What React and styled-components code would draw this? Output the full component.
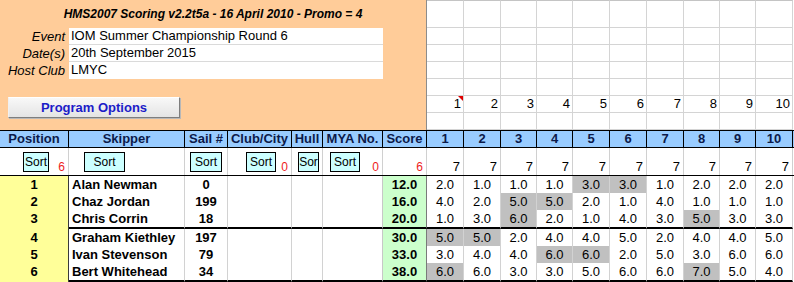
import React from "react";
import styled, { createGlobalStyle } from "styled-components";

const GlobalStyle = createGlobalStyle`
  body {
    margin: 0;
    background: #fff;
    font-family: "Liberation Sans", Arial, sans-serif;
    font-size: 13px;
    color: #000;
  }
`;

// column widths copied off the sheet
const COLS = "69px 116px 43px 64px 31px 60px 44px 37px 37px 36px 36px 37px 37px 37px 36px 36px 37px";
const RACE_COLS = "37px 37px 36px 36px 37px 37px 37px 36px 36px 37px";

const Sheet = styled.div`
  width: 794px;
  height: 282px;
  overflow: hidden;
  display: flex;
  flex-direction: column;
`;

const Top = styled.div`
  display: flex;
  height: 130px;
`;

const Panel = styled.div`
  box-sizing: border-box;
  width: 427px;
  background: #ffcc99;
  border-right: 1px solid #8c8c8c;
  display: flex;
  flex-direction: column;
`;

const Title = styled.div`
  height: 28px;
  line-height: 28px;
  text-align: center;
  font-size: 12px;
  font-weight: 700;
  font-style: italic;
`;

const Info = styled.div`
  display: grid;
  grid-template-columns: 69px 314px;
  grid-auto-rows: 17px;
`;

const Label = styled.div`
  text-align: right;
  padding-right: 4px;
  font-style: italic;
  line-height: 17px;
`;

const Value = styled.div`
  box-sizing: border-box;
  background: #fff;
  padding-left: 2px;
  line-height: 16px;
  border-bottom: 1px solid ${(p) => (p.$last ? "#fff" : "#dadada")};
`;

const ButtonRow = styled.div`
  padding: 18px 0 0 8px;
`;

const OptionsButton = styled.button`
  box-sizing: border-box;
  width: 172px;
  height: 21px;
  padding: 0;
  font-family: "Liberation Sans", Arial, sans-serif;
  font-size: 13px;
  font-weight: 700;
  color: #1c1cc8;
  background: linear-gradient(#f8f8f8, #e4e4e4);
  border: 1px solid;
  border-color: #ffffff #7e7e7e #7e7e7e #f0f0f0;
  box-shadow: 1px 1px 0 #b8b8b8;
`;

const RightGrid = styled.div`
  flex: 1;
  display: grid;
  grid-template-columns: ${RACE_COLS};
  grid-template-rows: 28px repeat(6, 17px);
`;

const GridCell = styled.div`
  box-sizing: border-box;
  position: relative;
  border-right: 1px solid #d4d4d4;
  border-bottom: 1px solid #d4d4d4;
  border-top: ${(p) => (p.$first ? "1px solid #c4c4c4" : "none")};
  text-align: right;
  padding-right: 2px;
  line-height: 16px;

  ${(p) =>
    p.$note &&
    `
    &::after {
      content: "";
      position: absolute;
      top: 0;
      right: 0;
      border-top: 5px solid #e00000;
      border-left: 5px solid transparent;
    }
  `}
`;

const Row = styled.div`
  box-sizing: border-box;
  display: grid;
  grid-template-columns: ${COLS};
  height: ${(p) => p.$h}px;
`;

const HeadRow = styled(Row)`
  border-top: 1px solid #000;
  border-bottom: 1px solid #000;
  background: #99ccff;
`;

const HeadCell = styled.div`
  box-sizing: border-box;
  border-right: 1px solid #000;
  text-align: center;
  line-height: 16px;
  font-weight: 700;
  font-size: 13px;
  color: #0c1a4a;
  white-space: nowrap;
  overflow: hidden;
`;

const SortRow = styled(Row)`
  border-bottom: 1px solid #000;
`;

const SortCell = styled.div`
  box-sizing: border-box;
  display: flex;
  align-items: flex-start;
  padding: 4px 3px 1px ${(p) => p.$pl || 0}px;
  border-right: 1px solid #d0d0d0;
  overflow: hidden;
`;

const SortButton = styled.div`
  box-sizing: border-box;
  width: ${(p) => p.$w}px;
  height: 20px;
  flex-shrink: 0;
  background: #ccffff;
  border: 1px solid #000;
  font-size: 12px;
  line-height: 18px;
  text-align: center;
  white-space: nowrap;
  overflow: hidden;
`;

const Count = styled.span`
  margin-left: auto;
  align-self: flex-end;
  line-height: 14px;
  color: ${(p) => (p.$red ? "#ee1c1c" : "#000")};
  font-size: ${(p) => (p.$red ? 12 : 13)}px;
`;

const Cell = styled.div`
  box-sizing: border-box;
  line-height: 17px;
  padding: 0 ${(p) => p.$pad || 0}px;
  text-align: ${(p) => p.$align || "center"};
  font-weight: ${(p) => (p.$bold ? 700 : 400)};
  background: ${(p) => p.$bg || "#fff"};
  border-right: 1px solid ${(p) => p.$edge || "#d2d2d2"};
  border-bottom: ${(p) => (p.$sep ? "2px solid #000" : "none")};
  white-space: nowrap;
  overflow: hidden;
`;

const races = [1, 2, 3, 4, 5, 6, 7, 8, 9, 10];

const results = [
  { pos: 1, name: "Alan Newman", sail: "0", score: "12.0", r: ["2.0", "1.0", "1.0", "1.0", "3.0", "3.0", "1.0", "2.0", "2.0", "2.0"], drop: [4, 5] },
  { pos: 2, name: "Chaz Jordan", sail: "199", score: "16.0", r: ["4.0", "2.0", "5.0", "5.0", "2.0", "1.0", "4.0", "1.0", "1.0", "1.0"], drop: [2, 3] },
  { pos: 3, name: "Chris Corrin", sail: "18", score: "20.0", r: ["1.0", "3.0", "6.0", "2.0", "1.0", "4.0", "3.0", "5.0", "3.0", "3.0"], drop: [2, 7], sep: true },
  { pos: 4, name: "Graham Kiethley", sail: "197", score: "30.0", r: ["5.0", "5.0", "2.0", "4.0", "4.0", "5.0", "2.0", "4.0", "4.0", "5.0"], drop: [0, 1] },
  { pos: 5, name: "Ivan Stevenson", sail: "79", score: "33.0", r: ["3.0", "4.0", "4.0", "6.0", "6.0", "2.0", "5.0", "3.0", "6.0", "6.0"], drop: [3, 4] },
  { pos: 6, name: "Bert Whitehead", sail: "34", score: "38.0", r: ["6.0", "6.0", "3.0", "3.0", "5.0", "6.0", "6.0", "7.0", "5.0", "4.0"], drop: [0, 7], sep: true },
];

const headers = ["Position", "Skipper", "Sail #", "Club/City", "Hull", "MYA No.", "Score"];

const App = () => {
  return (
    <>
      <GlobalStyle />
      <Sheet>
        <Top>
          <Panel>
            <Title>HMS2007 Scoring v2.2t5a - 16 April 2010 - Promo = 4</Title>
            <Info>
              <Label>Event</Label>
              <Value>IOM Summer Championship Round 6</Value>
              <Label>Date(s)</Label>
              <Value>20th September 2015</Value>
              <Label>Host Club</Label>
              <Value $last>LMYC</Value>
            </Info>
            <ButtonRow>
              <OptionsButton>Program Options</OptionsButton>
            </ButtonRow>
          </Panel>
          <RightGrid>
            {[0, 1, 2, 3, 4, 5, 6].map((row) =>
              races.map((n) => (
                <GridCell key={`${row}-${n}`} $first={row === 0} $note={row === 5 && n === 1}>
                  {row === 5 ? n : ""}
                </GridCell>
              ))
            )}
          </RightGrid>
        </Top>

        <HeadRow $h={18}>
          {headers.map((h) => (
            <HeadCell key={h}>{h}</HeadCell>
          ))}
          {races.map((n) => (
            <HeadCell key={n}>{n}</HeadCell>
          ))}
        </HeadRow>

        <SortRow $h={28}>
          <SortCell $pl={23}>
            <SortButton $w={26}>Sort</SortButton>
            <Count $red>6</Count>
          </SortCell>
          <SortCell $pl={15}>
            <SortButton $w={41}>Sort</SortButton>
          </SortCell>
          <SortCell $pl={5}>
            <SortButton $w={32}>Sort</SortButton>
          </SortCell>
          <SortCell $pl={18}>
            <SortButton $w={30}>Sort</SortButton>
            <Count $red>0</Count>
          </SortCell>
          <SortCell $pl={6}>
            {/* the button is too narrow on the sheet, only "Sor" shows */}
            <SortButton $w={21}>Sor</SortButton>
          </SortCell>
          <SortCell $pl={7}>
            <SortButton $w={30}>Sort</SortButton>
            <Count $red>0</Count>
          </SortCell>
          <SortCell>
            <Count $red>6</Count>
          </SortCell>
          {races.map((n) => (
            <SortCell key={n}>
              <Count>7</Count>
            </SortCell>
          ))}
        </SortRow>

        {results.map((it) => (
          <Row key={it.pos} $h={it.sep ? 19 : 17}>
            <Cell $bold $bg="#ffff99" $edge="#3a3a3a">{it.pos}</Cell>
            <Cell $bold $align="left" $pad={3} $sep={it.sep}>{it.name}</Cell>
            <Cell $bold $sep={it.sep}>{it.sail}</Cell>
            <Cell $sep={it.sep} />
            <Cell $sep={it.sep} />
            <Cell $sep={it.sep} $edge="#c8c8c8" />
            <Cell $bold $bg="#ccffcc" $edge="#7a7a7a" $sep={it.sep}>{it.score}</Cell>
            {it.r.map((v, idx) => (
              <Cell key={idx} $sep={it.sep} $bg={it.drop.includes(idx) ? "#c0c0c0" : "#fff"}>
                {v}
              </Cell>
            ))}
          </Row>
        ))}
      </Sheet>
    </>
  );
};

export default App;
